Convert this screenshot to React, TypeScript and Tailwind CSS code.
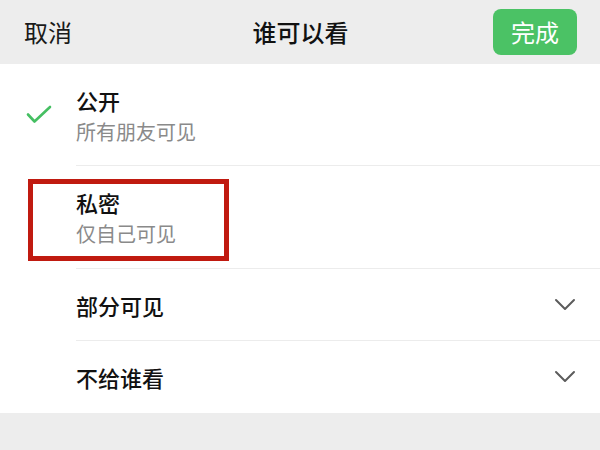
const font = { fontFamily: '"Noto Sans CJK SC", "Noto Sans", sans-serif' };

function Check() {
  return (
    <svg width="26" height="20" viewBox="0 0 26 20" fill="none" className="shrink-0">
      <path d="M2 9.5 L8.5 16.5 L24 2" stroke="#45bf62" strokeWidth="2.6" strokeLinecap="round" strokeLinejoin="round" />
    </svg>
  );
}

function Chevron() {
  return (
    <svg width="22" height="14" viewBox="0 0 22 14" fill="none">
      <path d="M2 2 L11 11 L20 2" stroke="#5c5c5c" strokeWidth="2" strokeLinecap="round" strokeLinejoin="round" />
    </svg>
  );
}

const options = [
  { title: "公开", sub: "所有朋友可见", checked: true, h: "h-[102px]" },
  { title: "私密", sub: "仅自己可见", checked: false, h: "h-[103px]" },
];

const groups = ["部分可见", "不给谁看"];

export default function App() {
  return (
    <div className="relative h-[450px] w-[600px] overflow-hidden bg-[#ededed]" style={font}>
      {/* 顶部栏 */}
      <div className="flex h-16 items-center justify-between bg-[#ededed] pl-[24px] pr-[23px]">
        <span className="w-[84px] text-[24px] leading-none text-[#1a1a1a]">取消</span>
        <span className="text-[24px] font-medium leading-none text-[#111]">谁可以看</span>
        <button className="flex h-[46px] w-[84px] items-center justify-center rounded-[8px] bg-[#4bc265] text-[24px] leading-none text-white">
          完成
        </button>
      </div>

      <div className="bg-white">
        {options.map((o) => (
          <div key={o.title} className={`flex items-center ${o.h}`}>
            <div className="flex w-[76px] items-center pl-[26px]">{o.checked && <Check />}</div>
            <div className="flex h-full flex-1 flex-col justify-center border-b border-[#ececec] pt-[2px]">
              <span className="text-[22px] font-medium leading-[31px] text-[#111]">{o.title}</span>
              <span className="text-[20px] leading-[31px] text-[#8a8a8a]">{o.sub}</span>
            </div>
          </div>
        ))}
        {groups.map((g, i) => (
          <div key={g} className="flex h-[72px] items-center pl-[76px]">
            <div
              className={`flex h-full flex-1 items-center justify-between pr-[24px] ${
                i === 0 ? "border-b border-[#ececec]" : ""
              }`}
            >
              <span className="text-[22px] font-medium leading-none text-[#111]">{g}</span>
              <Chevron />
            </div>
          </div>
        ))}
      </div>

      {/* 标注框 */}
      <div className="absolute left-[28px] top-[179px] h-[82px] w-[201px] border-[5px] border-[#c01a10]" />
    </div>
  );
}
